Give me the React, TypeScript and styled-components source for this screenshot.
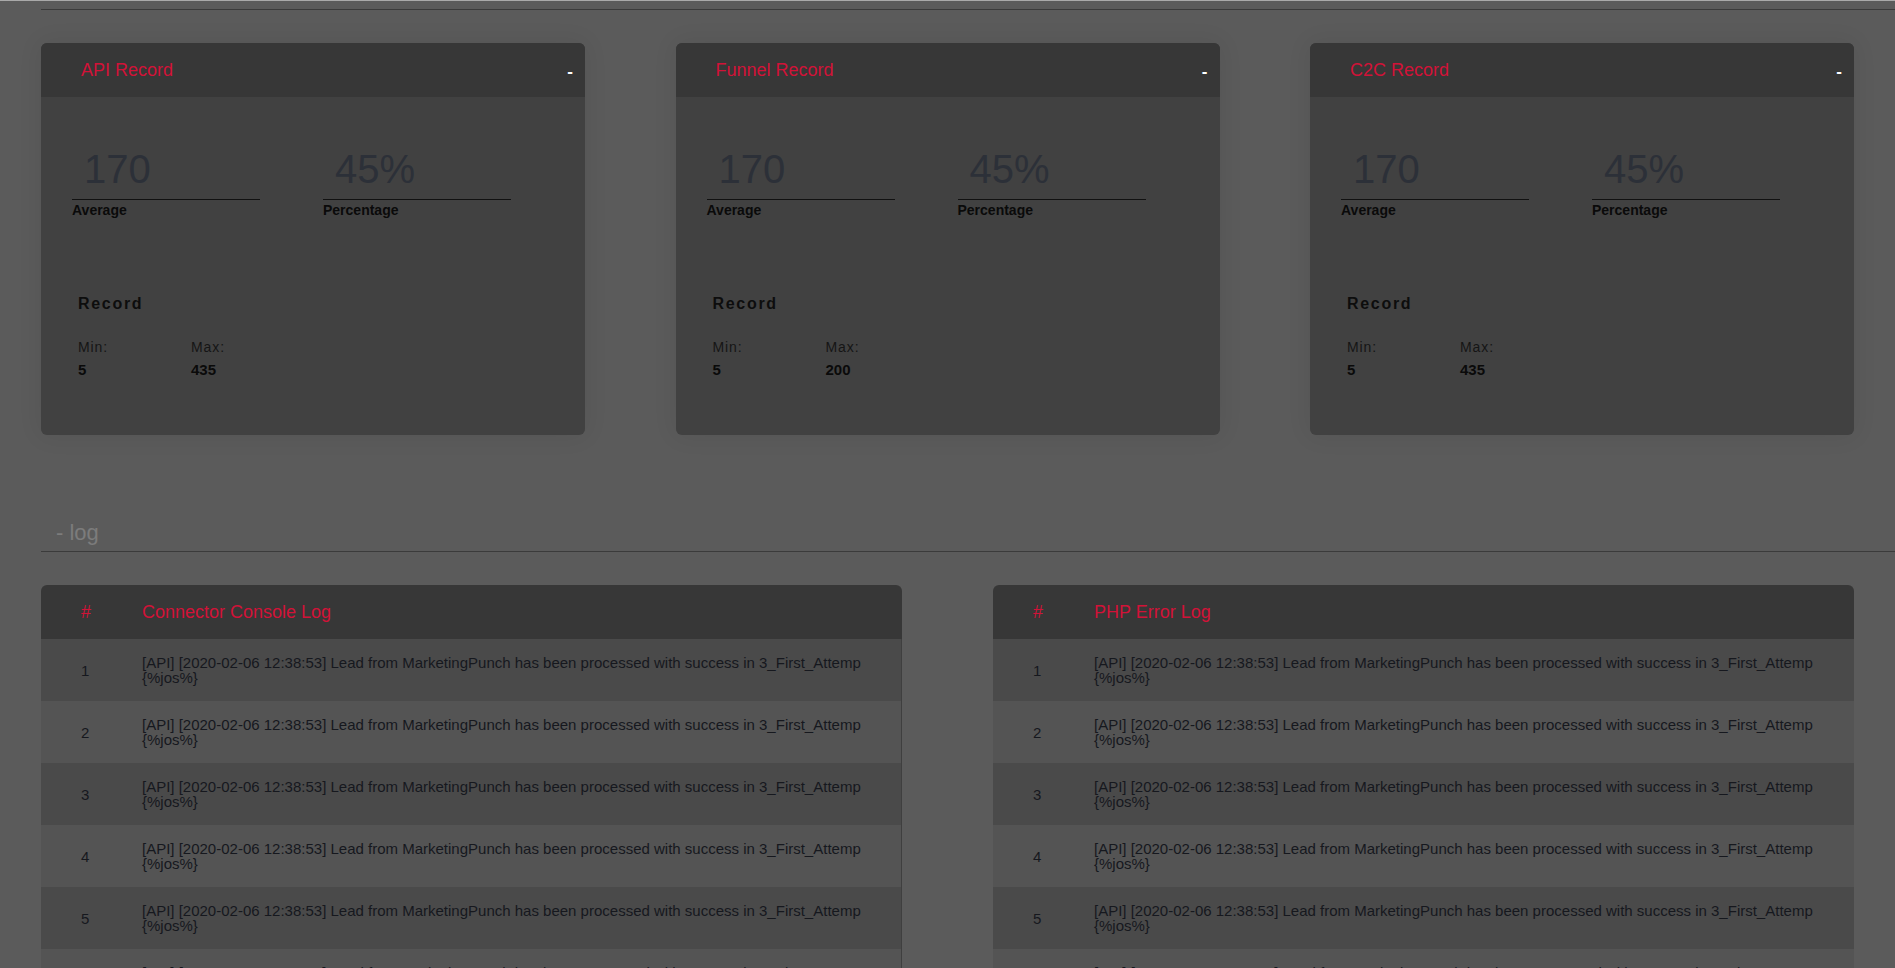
import React from "react";
import styled, { createGlobalStyle } from "styled-components";

const Global = createGlobalStyle`
  html, body {
    margin: 0;
    padding: 0;
    overflow: hidden;
    background: #5b5b5b;
  }
  body {
    font-family: "Liberation Sans", Arial, sans-serif;
  }
  * { box-sizing: border-box; }
`;

const RED = "#d21237";

const Page = styled.div`
  height: 968px;
  overflow: hidden;
  border-top: 1px solid #a9a9a9;
  padding: 8px 0 0 41px;
  background: #5b5b5b;
`;

const Rule = styled.div`
  border-top: 1px solid #3b3b3b;
`;

const CardsRow = styled.div`
  display: flex;
  justify-content: space-between;
  margin: 33px 41px 0 0;
`;

const Card = styled.section`
  width: 544px;
  border-radius: 6px;
  overflow: hidden;
  background: #414141;
  box-shadow: 0 0 24px rgba(0, 0, 0, 0.08);
`;

const CardHeader = styled.header`
  height: 54px;
  background: #373737;
  display: flex;
  align-items: center;
  justify-content: space-between;
  padding: 0 12px 0 40px;
`;

const CardTitle = styled.h2`
  margin: 0;
  font-size: 18px;
  font-weight: 400;
  color: ${RED};
`;

const Collapse = styled.span`
  color: #ffffff;
  font-size: 17px;
  font-weight: 700;
  margin-top: 4px;
`;

const CardBody = styled.div`
  padding: 49px 0 57px 31px;
`;

const Stats = styled.div`
  display: flex;
  gap: 63px;
`;

const Stat = styled.div`
  width: 188px;
`;

const StatValue = styled.div`
  font-size: 40px;
  line-height: 46px;
  color: #2c3038;
  padding: 0 0 7px 12px;
  border-bottom: 1px solid #111111;
`;

const StatLabel = styled.div`
  margin-top: 2px;
  font-size: 14px;
  line-height: 16px;
  font-weight: 700;
  color: #0a0a0a;
`;

const RecordTitle = styled.h3`
  margin: 76px 0 0 6px;
  font-size: 16px;
  line-height: 19px;
  font-weight: 700;
  letter-spacing: 1.7px;
  color: #0d0d0d;
`;

const MinMax = styled.div`
  display: grid;
  grid-template-columns: 113px 113px;
  margin: 26px 0 0 6px;
`;

const MinMaxLabel = styled.div`
  font-size: 14px;
  line-height: 16px;
  letter-spacing: 0.9px;
  color: #151515;
`;

const MinMaxValue = styled.div`
  margin-top: 6px;
  font-size: 15px;
  line-height: 17px;
  font-weight: 700;
  color: #0a0a0a;
`;

const SectionTitle = styled.h2`
  margin: 85px 0 0 0;
  padding: 0 0 6px 15px;
  font-size: 22px;
  line-height: 25px;
  font-weight: 400;
  color: #7c7c7c;
  border-bottom: 1px solid #3b3b3b;
`;

const LogsRow = styled.div`
  display: flex;
  justify-content: space-between;
  margin: 33px 41px 0 0;
`;

const LogTable = styled.div`
  width: 861px;
  border-radius: 6px 6px 0 0;
  overflow: hidden;
`;

const LogHeader = styled.div`
  height: 54px;
  background: #373737;
  display: grid;
  grid-template-columns: 101px 1fr;
  align-items: center;
  font-size: 18px;
  color: ${RED};
`;

const LogBody = styled.div<{ $edge?: boolean }>`
  border-right: ${(p) => (p.$edge ? "1px solid #3f3f3f" : "none")};
  min-height: 400px;
`;

const LogRow = styled.div<{ $odd: boolean }>`
  height: 62px;
  display: grid;
  grid-template-columns: 101px 1fr;
  align-items: center;
  background: ${(p) => (p.$odd ? "#4a4a4a" : "#545454")};
  font-size: 15px;
  line-height: 15px;
  color: #16181e;
`;

const NumCell = styled.div`
  padding-left: 40px;
`;

const TextLine = styled.span`
  display: block;
`;

type RecordData = { title: string; min: string; max: string };

const records: RecordData[] = [
  { title: "API Record", min: "5", max: "435" },
  { title: "Funnel Record", min: "5", max: "200" },
  { title: "C2C Record", min: "5", max: "435" },
];

const RecordCard = ({ data }: { data: RecordData }) => (
  <Card>
    <CardHeader>
      <CardTitle>{data.title}</CardTitle>
      <Collapse>-</Collapse>
    </CardHeader>
    <CardBody>
      <Stats>
        <Stat>
          <StatValue>170</StatValue>
          <StatLabel>Average</StatLabel>
        </Stat>
        <Stat>
          <StatValue>45%</StatValue>
          <StatLabel>Percentage</StatLabel>
        </Stat>
      </Stats>
      <RecordTitle>Record</RecordTitle>
      <MinMax>
        <div>
          <MinMaxLabel>Min:</MinMaxLabel>
          <MinMaxValue>{data.min}</MinMaxValue>
        </div>
        <div>
          <MinMaxLabel>Max:</MinMaxLabel>
          <MinMaxValue>{data.max}</MinMaxValue>
        </div>
      </MinMax>
    </CardBody>
  </Card>
);

const rows = [1, 2, 3, 4, 5, 6];

const Log = ({ title, edge }: { title: string; edge?: boolean }) => (
  <LogTable>
    <LogHeader>
      <NumCell>#</NumCell>
      <div>{title}</div>
    </LogHeader>
    <LogBody $edge={edge}>
      {rows.map((n) => (
        <LogRow key={n} $odd={n % 2 === 1}>
          <NumCell>{n}</NumCell>
          <div>
            <TextLine>
              [API] [2020-02-06 12:38:53] Lead from MarketingPunch has been processed with success in 3_First_Attemp
            </TextLine>
            <TextLine>{"{%jos%}"}</TextLine>
          </div>
        </LogRow>
      ))}
    </LogBody>
  </LogTable>
);

export default function App() {
  return (
    <>
      <Global />
      <Page>
        <Rule />
        <CardsRow>
          {records.map((r) => (
            <RecordCard key={r.title} data={r} />
          ))}
        </CardsRow>
        <SectionTitle>- log</SectionTitle>
        <LogsRow>
          <Log title="Connector Console Log" edge />
          <Log title="PHP Error Log" />
        </LogsRow>
      </Page>
    </>
  );
}
